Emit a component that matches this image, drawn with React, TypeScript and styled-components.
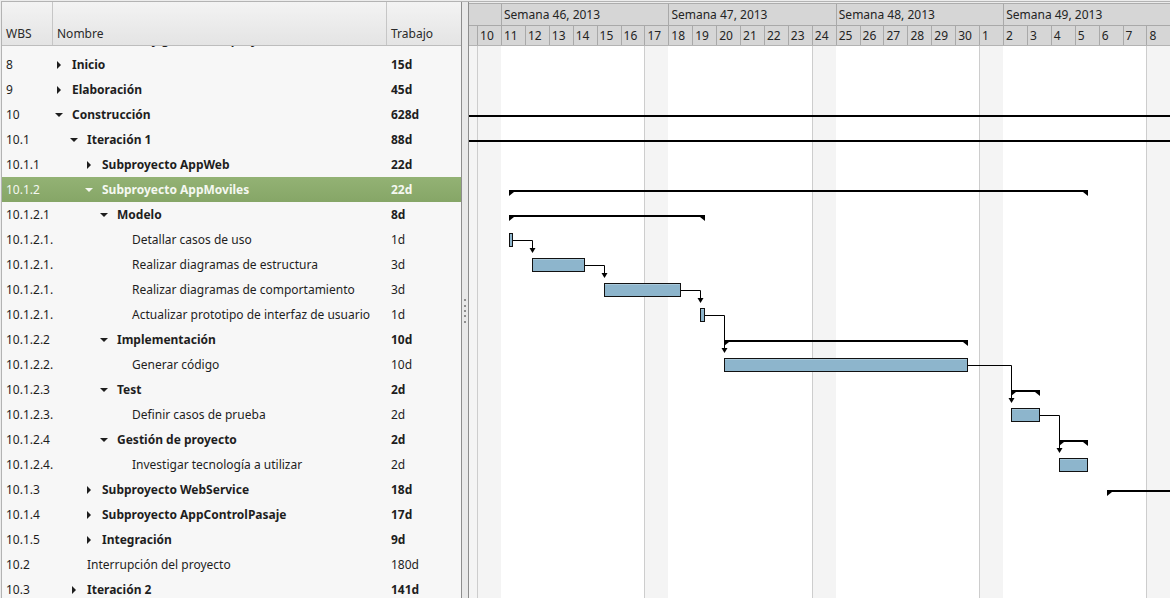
import React from 'react';
import styled, { createGlobalStyle, css } from 'styled-components';

const GlobalStyle = createGlobalStyle`
  html, body { margin: 0; padding: 0; }
  body {
    font-family: "Noto Sans", "Open Sans", sans-serif;
    font-size: 12px;
    color: #1e1e1e;
    background: #ececec;
  }
`;

const DAY = 167.4 / 7;
const STRIP_OFFSET = 32 - 2 * DAY;
const CHART_LEFT = 469;

type Kind = 'collapsed' | 'expanded' | 'leaf';
interface Task {
  wbs: string;
  name: string;
  work: string;
  level: number;
  kind: Kind;
  selected?: boolean;
}

const tasks: Task[] = [
  { wbs: '', name: 'Planificación y gestión del proyecto', work: '', level: 1, kind: 'collapsed' },
  { wbs: '8', name: 'Inicio', work: '15d', level: 1, kind: 'collapsed' },
  { wbs: '9', name: 'Elaboración', work: '45d', level: 1, kind: 'collapsed' },
  { wbs: '10', name: 'Construcción', work: '628d', level: 1, kind: 'expanded' },
  { wbs: '10.1', name: 'Iteración 1', work: '88d', level: 2, kind: 'expanded' },
  { wbs: '10.1.1', name: 'Subproyecto AppWeb', work: '22d', level: 3, kind: 'collapsed' },
  { wbs: '10.1.2', name: 'Subproyecto AppMoviles', work: '22d', level: 3, kind: 'expanded', selected: true },
  { wbs: '10.1.2.1', name: 'Modelo', work: '8d', level: 4, kind: 'expanded' },
  { wbs: '10.1.2.1.1', name: 'Detallar casos de uso', work: '1d', level: 5, kind: 'leaf' },
  { wbs: '10.1.2.1.2', name: 'Realizar diagramas de estructura', work: '3d', level: 5, kind: 'leaf' },
  { wbs: '10.1.2.1.3', name: 'Realizar diagramas de comportamiento', work: '3d', level: 5, kind: 'leaf' },
  { wbs: '10.1.2.1.4', name: 'Actualizar prototipo de interfaz de usuario', work: '1d', level: 5, kind: 'leaf' },
  { wbs: '10.1.2.2', name: 'Implementación', work: '10d', level: 4, kind: 'expanded' },
  { wbs: '10.1.2.2.1', name: 'Generar código', work: '10d', level: 5, kind: 'leaf' },
  { wbs: '10.1.2.3', name: 'Test', work: '2d', level: 4, kind: 'expanded' },
  { wbs: '10.1.2.3.1', name: 'Definir casos de prueba', work: '2d', level: 5, kind: 'leaf' },
  { wbs: '10.1.2.4', name: 'Gestión de proyecto', work: '2d', level: 4, kind: 'expanded' },
  { wbs: '10.1.2.4.1', name: 'Investigar tecnología a utilizar', work: '2d', level: 5, kind: 'leaf' },
  { wbs: '10.1.3', name: 'Subproyecto WebService', work: '18d', level: 3, kind: 'collapsed' },
  { wbs: '10.1.4', name: 'Subproyecto AppControlPasaje', work: '17d', level: 3, kind: 'collapsed' },
  { wbs: '10.1.5', name: 'Integración', work: '9d', level: 3, kind: 'collapsed' },
  { wbs: '10.2', name: 'Interrupción del proyecto', work: '180d', level: 2, kind: 'leaf' },
  { wbs: '10.3', name: 'Iteración 2', work: '141d', level: 2, kind: 'collapsed' },
];

const weeks = [
  { days: 2, label: '' },
  { days: 7, label: 'Semana 46, 2013' },
  { days: 7, label: 'Semana 47, 2013' },
  { days: 7, label: 'Semana 48, 2013' },
  { days: 7, label: 'Semana 49, 2013' },
];

const days: { n: number; shade: boolean; line: boolean }[] = [];
for (let d = 9; d <= 30; d++) days.push({ n: d, shade: d === 9 || d === 10 || d === 17 || d === 24, line: d === 10 || d === 17 || d === 24 });
for (let d = 1; d <= 8; d++) days.push({ n: d, shade: d === 1 || d === 8, line: d === 1 || d === 8 });

/* ---------- layout ---------- */

const Page = styled.div`
  height: 598px;
  box-sizing: border-box;
  padding: 1px 0 0 1px;
  background: #ececec;
  overflow: hidden;
`;

const Frame = styled.div`
  height: 100%;
  box-sizing: border-box;
  border-top: 1px solid #b3b3b3;
  border-left: 1px solid #b3b3b3;
  display: flex;
`;

const LeftPanel = styled.div`
  width: 460px;
  flex: none;
  box-sizing: border-box;
  border-right: 1px solid #8d8d8d;
  display: flex;
  flex-direction: column;
  background: #f7f7f7;
`;

const TableHeader = styled.div`
  height: 44px;
  flex: none;
  box-sizing: border-box;
  display: flex;
  border-bottom: 1px solid #bdbdbd;
  background: linear-gradient(#f3f3f3, #e4e4e4);
`;

const HeaderCell = styled.div<{ $w?: number }>`
  ${p => (p.$w ? css`width: ${p.$w}px; flex: none;` : css`flex: 1;`)}
  box-sizing: border-box;
  display: flex;
  align-items: flex-end;
  padding: 0 0 3px 4px;
  line-height: 16px;
  color: #2a2a2a;
  border-right: ${p => (p.$w ? '1px solid #c6c6c6' : 'none')};
`;

const TableBody = styled.div`
  flex: 1;
  overflow: hidden;
`;

const RowList = styled.div`
  margin-top: -19px;
`;

const TableRow = styled.div<{ $selected?: boolean }>`
  display: flex;
  align-items: center;
  height: 25px;
  line-height: 16px;
  ${p =>
    p.$selected &&
    css`
      background: linear-gradient(#93b274, #86a667);
      color: #f5f8f1;
    `}
`;

const WbsCell = styled.div`
  width: 51px;
  flex: none;
  box-sizing: border-box;
  padding-left: 4px;
  overflow: hidden;
  white-space: nowrap;
`;

const NameCell = styled.div<{ $level: number }>`
  width: 334px;
  flex: none;
  box-sizing: border-box;
  padding-left: ${p => 4 + 15 * (p.$level - 1)}px;
  display: flex;
  align-items: center;
  overflow: hidden;
  white-space: nowrap;
`;

const Toggle = styled.span`
  width: 15px;
  height: 16px;
  flex: none;
  display: flex;
  align-items: center;
`;

const Triangle = styled.span<{ $open: boolean }>`
  width: 0;
  height: 0;
  ${p =>
    p.$open
      ? css`
          margin-left: -2px;
          border-left: 4px solid transparent;
          border-right: 4px solid transparent;
          border-top: 4px solid currentColor;
        `
      : css`
          border-top: 4px solid transparent;
          border-bottom: 4px solid transparent;
          border-left: 4px solid currentColor;
        `}
`;

const TaskName = styled.span<{ $bold: boolean }>`
  font-weight: ${p => (p.$bold ? 700 : 400)};
`;

const WorkCell = styled.div<{ $bold: boolean }>`
  flex: 1;
  padding-left: 4px;
  font-weight: ${p => (p.$bold ? 700 : 400)};
  white-space: nowrap;
`;

const Splitter = styled.div`
  width: 6px;
  flex: none;
  background: #e9e9e9;
  display: flex;
  flex-direction: column;
  align-items: center;
  justify-content: center;
  gap: 3.4px;
  padding-top: 22px;
  box-sizing: border-box;
`;

const Grip = styled.span`
  width: 2px;
  height: 2px;
  background: #8e8e8e;
`;

const ChartPanel = styled.div`
  flex: 1;
  min-width: 0;
  border-left: 1px solid #8d8d8d;
  display: flex;
  flex-direction: column;
  overflow: hidden;
  background: #ececec;
`;

const ChartHeader = styled.div`
  margin-top: 1px;
  border-top: 1px solid #adadad;
  background: #d6d6d6;
  flex: none;
  overflow: hidden;
  color: #242424;
`;

const HeaderStrip = styled.div`
  margin-left: ${STRIP_OFFSET}px;
  width: max-content;
`;

const WeekRow = styled.div`
  display: flex;
  height: 22px;
  box-sizing: border-box;
  border-bottom: 1px solid #a9a9a9;
`;

const WeekCell = styled.div<{ $days: number }>`
  width: ${p => p.$days * DAY}px;
  flex: none;
  box-sizing: border-box;
  border-left: 1px solid #a9a9a9;
  padding-left: 2px;
  line-height: 21px;
  white-space: nowrap;
  overflow: hidden;
`;

const DayRow = styled.div`
  display: flex;
  height: 20px;
  box-sizing: border-box;
  border-bottom: 1px solid #b3b3b3;
`;

const DayCell = styled.div`
  width: ${DAY}px;
  flex: none;
  box-sizing: border-box;
  border-left: 1px solid #a9a9a9;
  padding-left: 2px;
  line-height: 19px;
  white-space: nowrap;
  overflow: hidden;
`;

const ChartBody = styled.div`
  flex: 1;
  position: relative;
  overflow: hidden;
  background: #ffffff;
`;

const DayStrip = styled.div`
  display: flex;
  height: 100%;
  margin-left: ${STRIP_OFFSET}px;
  width: max-content;
`;

const DayColumn = styled.div<{ $shade: boolean; $line: boolean }>`
  width: ${DAY}px;
  flex: none;
  height: 100%;
  box-sizing: border-box;
  background: ${p => (p.$shade ? '#f4f4f4' : '#ffffff')};
  border-left: 1px solid ${p => (p.$line ? '#cdcdcd' : 'transparent')};
`;

const Overlay = styled.svg`
  position: absolute;
  left: 0;
  top: 0;
  width: 100%;
  height: 100%;
  overflow: visible;
`;

/* ---------- chart drawing ---------- */

const cx = (px: number) => px - CHART_LEFT;
const rowTop = (i: number) => 25 * i - 19;

const bars: { row: number; x1: number; x2: number }[] = [
  { row: 8, x1: 509, x2: 513 },
  { row: 9, x1: 532, x2: 585 },
  { row: 10, x1: 604, x2: 681 },
  { row: 11, x1: 700, x2: 705 },
  { row: 13, x1: 724, x2: 968 },
  { row: 15, x1: 1011, x2: 1040 },
  { row: 17, x1: 1059, x2: 1088 },
];

const brackets: { row: number; x1: number; x2: number }[] = [
  { row: 6, x1: 509, x2: 1088 },
  { row: 7, x1: 509, x2: 705 },
  { row: 12, x1: 724, x2: 968 },
  { row: 14, x1: 1011, x2: 1040 },
  { row: 16, x1: 1059, x2: 1088 },
];

const deps: { from: number; to: number; x1: number; x2: number }[] = [
  { from: 8, to: 9, x1: 513, x2: 532 },
  { from: 9, to: 10, x1: 585, x2: 604 },
  { from: 10, to: 11, x1: 681, x2: 700 },
  { from: 11, to: 13, x1: 705, x2: 724 },
  { from: 13, to: 15, x1: 968, x2: 1011 },
  { from: 15, to: 17, x1: 1040, x2: 1059 },
];

function bracketPath(x1: number, x2: number, y: number) {
  return `M ${x1} ${y} H ${x2} V ${y + 6} L ${x2 - 5} ${y + 2} H ${x1 + 5} L ${x1} ${y + 6} Z`;
}

const GanttDrawing: React.FC = () => (
  <Overlay>
    {[3, 4].map(r => (
      <rect key={r} x={0} y={rowTop(r) + 13} width={720} height={2} fill="#000" />
    ))}
    {brackets.map(b => (
      <path key={`b${b.row}`} d={bracketPath(cx(b.x1), cx(b.x2), rowTop(b.row) + 13)} fill="#000" />
    ))}
    <path
      d={`M ${cx(1107)} ${rowTop(18) + 13} H 720 V ${rowTop(18) + 15} H ${cx(1107) + 5} L ${cx(1107)} ${rowTop(18) + 19} Z`}
      fill="#000"
    />
    {deps.map(d => {
      const y = rowTop(d.from) + 13.5;
      const x = cx(d.x2) + 0.5;
      const tip = rowTop(d.to) + 1;
      return (
        <g key={`d${d.from}`}>
          <path d={`M ${cx(d.x1)} ${y} H ${x} V ${tip - 3}`} stroke="#000" strokeWidth={1} fill="none" />
          <polygon points={`${x - 3},${tip - 5} ${x + 3},${tip - 5} ${x},${tip}`} fill="#000" />
        </g>
      );
    })}
    {bars.map(b => (
      <g key={`r${b.row}`}>
        <rect
          x={cx(b.x1) + 0.5}
          y={rowTop(b.row) + 6.5}
          width={b.x2 - b.x1 - 1}
          height={13}
          fill="#8db5cc"
          stroke="#111"
          strokeWidth={1}
        />
        {b.x2 - b.x1 > 4 && (
          <rect x={cx(b.x1) + 1} y={rowTop(b.row) + 7} width={b.x2 - b.x1 - 2} height={1} fill="#a8c8da" />
        )}
      </g>
    ))}
  </Overlay>
);

/* ---------- app ---------- */

export default function App() {
  return (
    <>
      <GlobalStyle />
      <Page>
        <Frame>
          <LeftPanel>
            <TableHeader>
              <HeaderCell $w={51}>WBS</HeaderCell>
              <HeaderCell $w={334}>Nombre</HeaderCell>
              <HeaderCell>Trabajo</HeaderCell>
            </TableHeader>
            <TableBody>
              <RowList>
                {tasks.map((t, i) => {
                  const bold = t.kind !== 'leaf';
                  return (
                    <TableRow key={i} $selected={t.selected}>
                      <WbsCell>{t.wbs}</WbsCell>
                      <NameCell $level={t.level}>
                        <Toggle>{t.kind !== 'leaf' && <Triangle $open={t.kind === 'expanded'} />}</Toggle>
                        <TaskName $bold={bold}>{t.name}</TaskName>
                      </NameCell>
                      <WorkCell $bold={bold}>{t.work}</WorkCell>
                    </TableRow>
                  );
                })}
              </RowList>
            </TableBody>
          </LeftPanel>
          <Splitter>
            <Grip />
            <Grip />
            <Grip />
            <Grip />
            <Grip />
          </Splitter>
          <ChartPanel>
            <ChartHeader>
              <HeaderStrip>
                <WeekRow>
                  {weeks.map((w, i) => (
                    <WeekCell key={i} $days={w.days}>
                      {w.label}
                    </WeekCell>
                  ))}
                </WeekRow>
                <DayRow>
                  {days.map((d, i) => (
                    <DayCell key={i}>{d.n}</DayCell>
                  ))}
                </DayRow>
              </HeaderStrip>
            </ChartHeader>
            <ChartBody>
              <DayStrip>
                {days.map((d, i) => (
                  <DayColumn key={i} $shade={d.shade} $line={d.line} />
                ))}
              </DayStrip>
              <GanttDrawing />
            </ChartBody>
          </ChartPanel>
        </Frame>
      </Page>
    </>
  );
}
